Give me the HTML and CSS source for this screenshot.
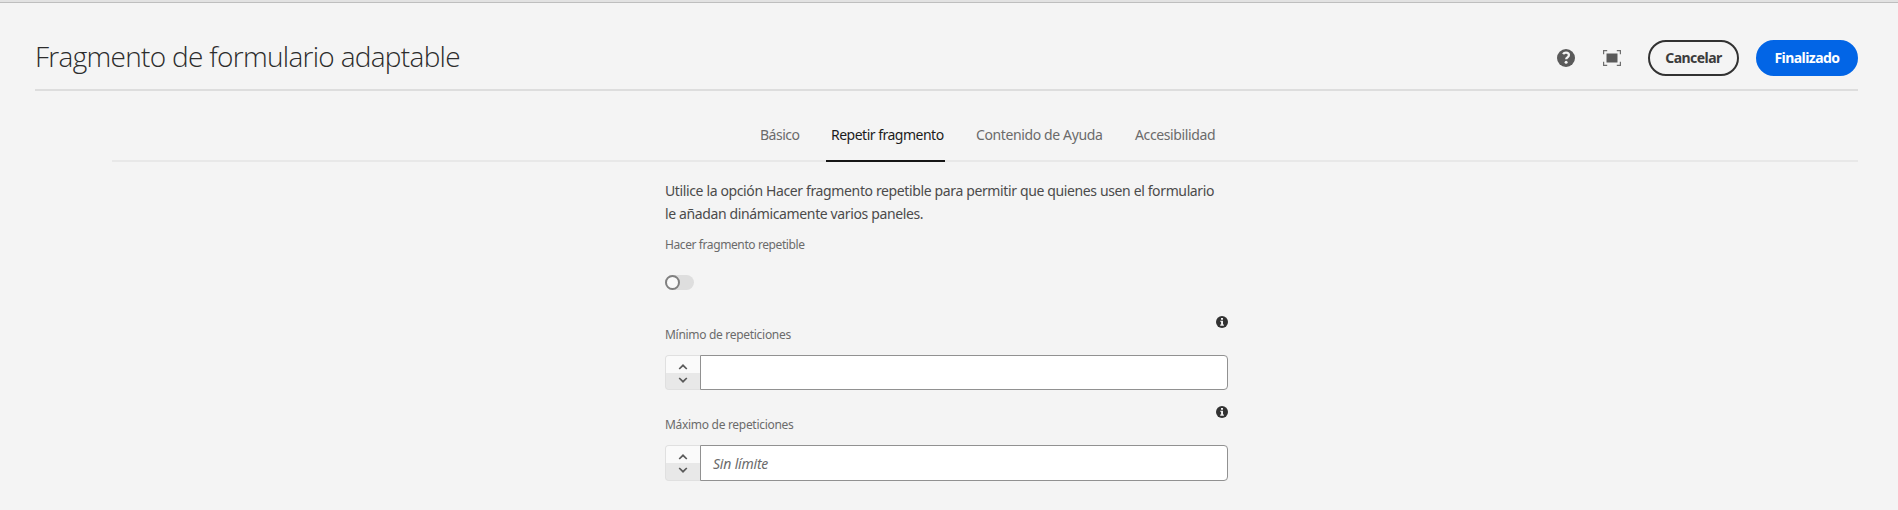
FILE: index.html
```html
<!DOCTYPE html>
<html lang="es">
<head>
<meta charset="utf-8">
<title>Fragmento de formulario adaptable</title>
<link rel="stylesheet" href="styles.css">
</head>
<body>
<div class="topbar"></div>
<header class="header">
  <h1 class="title"><span>Fragmento de formulario adaptable</span></h1>
  <div class="actions">
    <svg class="icon help" viewBox="0 0 18 18"><circle cx="9" cy="9" r="9" fill="#5a5a5a"/><path d="M6.100 5.200C6.800 4 8 3.700 9 3.700c1.700 0 2.900.9 2.900 2.400 0 2.300-2.700 2.200-2.700 4.200" fill="none" stroke="#f4f4f4" stroke-width="2.300"/><circle cx="9.100" cy="13.300" r="1.500" fill="#f4f4f4"/></svg>
    <svg class="icon frame" viewBox="0 0 18 16"><path fill="#5a5a5a" d="M3.500 3.500h11v9h-11z"/><path d="M.6 4.200V.6h3.600M13.800 .6h3.600v3.600M17.400 11.800v3.600h-3.600M4.200 15.400H.6v-3.600" fill="none" stroke="#6e6e6e" stroke-width="1.200"/></svg>
    <button class="btn cancel"><span>Cancelar</span></button>
    <button class="btn done"><span>Finalizado</span></button>
  </div>
</header>
<nav class="tabs">
  <a class="tab t1">Básico</a>
  <a class="tab t2 active">Repetir fragmento</a>
  <a class="tab t3">Contenido de Ayuda</a>
  <a class="tab t4">Accesibilidad</a>
</nav>
<main class="form">
  <p class="intro">Utilice la opción Hacer fragmento repetible para permitir que quienes usen el formulario<br>le añadan dinámicamente varios paneles.</p>
  <div class="label first">Hacer fragmento repetible</div>
  <div class="switch"><span class="knob"></span></div>
  <section class="field">
    <svg class="info" viewBox="0 0 12 12"><circle cx="6" cy="6" r="6" fill="#323232"/><path fill="#f4f4f4" d="M5 2h2v1.800H5zM4.200 4.700H7v3.900h.9v1.100H4.200V8.600h.9V5.800h-.9z"/></svg>
    <div class="label min">Mínimo de repeticiones</div>
    <div class="number">
      <div class="stepper">
        <div class="step up"><svg viewBox="0 0 10 6"><path d="M1.200 5 5 1.300 8.800 5"/></svg></div>
        <div class="step down"><svg viewBox="0 0 10 6"><path d="M1.200 1 5 4.700 8.800 1"/></svg></div>
      </div>
      <div class="input"></div>
    </div>
  </section>
  <section class="field second">
    <svg class="info" viewBox="0 0 12 12"><circle cx="6" cy="6" r="6" fill="#323232"/><path fill="#f4f4f4" d="M5 2h2v1.800H5zM4.200 4.700H7v3.900h.9v1.100H4.200V8.600h.9V5.800h-.9z"/></svg>
    <div class="label max">Máximo de repeticiones</div>
    <div class="number tall">
      <div class="stepper">
        <div class="step up"><svg viewBox="0 0 10 6"><path d="M1.200 5 5 1.300 8.800 5"/></svg></div>
        <div class="step down"><svg viewBox="0 0 10 6"><path d="M1.200 1 5 4.700 8.800 1"/></svg></div>
      </div>
      <div class="input"><span class="placeholder">Sin límite</span></div>
    </div>
  </section>
</main>
</body>
</html>
```

FILE: styles.css
```css
* { box-sizing: border-box; }
body { margin: 0; height: 510px; overflow: hidden; background: #f4f4f4; font-family: "Noto Sans", sans-serif; color: #4b4b4b; }
.topbar { height: 3px; background: #e2e2e2; border-bottom: 1px solid #bebebe; }
.header { display: flex; justify-content: space-between; margin: 0 40px 0 35px; height: 88px; padding-top: 37px; border-bottom: 2px solid #ddd; }
.title { margin: 0; font-family: "Open Sans", sans-serif; font-weight: 300; font-size: 28px; line-height: 32px; letter-spacing: -0.7px; color: #2c2c2c; white-space: nowrap; }
.actions { display: flex; align-items: center; height: 36px; }
.icon { display: block; width: 18px; flex: none; }
.help { height: 18px; margin-right: 28px; }
.frame { height: 16px; margin-right: 27px; }
.btn { height: 36px; padding: 0; border-radius: 18px; font: 700 14px/32px "Noto Sans", sans-serif; letter-spacing: -0.55px; white-space: nowrap; }
.cancel { width: 91px; margin-right: 17px; background: transparent; border: 2px solid #323232; color: #3c3c3c; }
.done { width: 102px; background: #0265e6; border: 2px solid #0265e6; color: #fff; }
.tabs { display: flex; margin: 0 40px 0 112px; height: 71px; padding: 28px 0 0 648px; border-bottom: 2px solid #e8e8e8; }
.tab { flex: none; height: 43px; font-size: 14px; line-height: 32px; white-space: nowrap; letter-spacing: -0.38px; color: #6b6b6b; }
.t1 { width: 66px; letter-spacing: -0.5px; }
.t2 { width: 119px; padding-left: 5px; letter-spacing: -0.5px; }
.t3 { width: 190px; padding-left: 31px; }
.active { color: #1c1c1c; border-bottom: 2px solid #161616; }
.form { width: 563px; margin-left: 665px; }
.intro { margin: 0; padding-top: 17px; font-size: 14px; line-height: 23px; letter-spacing: -0.37px; white-space: nowrap; }
.label { font-size: 12px; line-height: 18px; letter-spacing: -0.3px; color: #6b6b6b; }
.first { margin-top: 11px; letter-spacing: -0.4px; }
.switch { width: 29px; height: 15px; margin-top: 21px; border-radius: 8px; background: #dedede; }
.knob { display: block; width: 15px; height: 15px; border: 2px solid #808080; border-radius: 50%; background: #fafafa; }
.field { margin-top: 26px; }
.second { margin-top: 16px; }
.info { display: block; width: 12px; height: 12px; margin: 0 0 0 auto; }
.min, .max { margin-top: -2px; }
.number { display: flex; height: 35px; margin-top: 11px; }
.tall { height: 36px; }
.stepper { width: 35px; border: 1px solid #e0e0e0; border-right: 0; border-radius: 4px 0 0 4px; overflow: hidden; background: #e8e8e8; }
.step { display: flex; align-items: center; justify-content: center; height: 17px; }
.step svg { width: 10px; height: 6px; fill: none; stroke: #5a5a5a; stroke-width: 1.700; }
.up { background: #fafafa; padding-top: 4px; }
.down { padding-bottom: 4px; }
.input { flex: 1; display: flex; align-items: center; background: #fff; border: 1px solid #919191; border-radius: 0 4px 4px 0; padding-left: 12px; }
.placeholder { font-size: 14px; font-style: italic; letter-spacing: -0.2px; color: #6b6b6b; }
```
